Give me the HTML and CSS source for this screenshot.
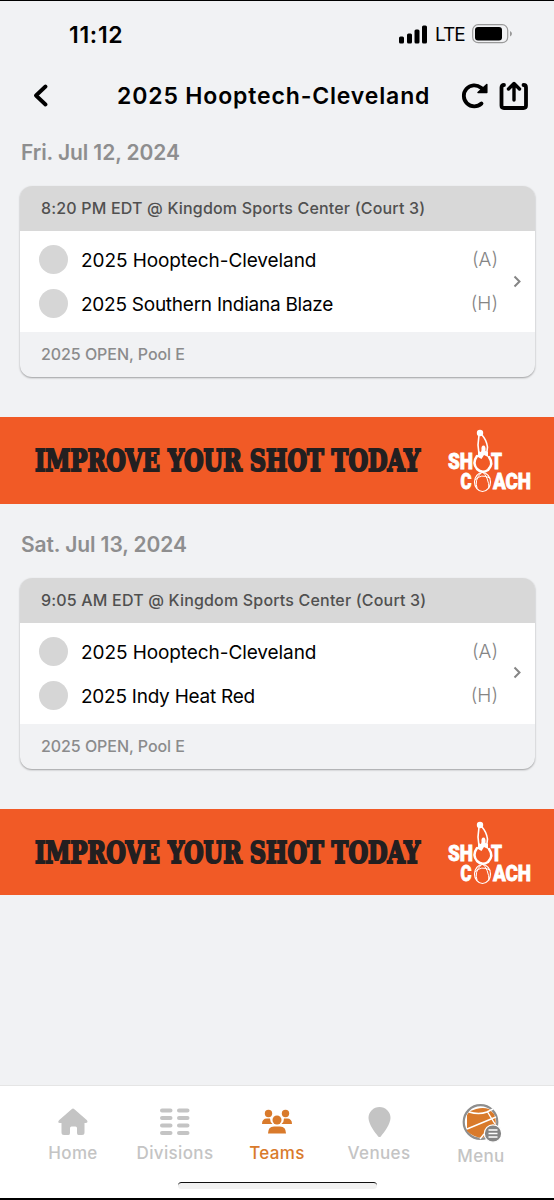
FILE: index.html
```
<!DOCTYPE html>
<html lang="en">
<head>
    <meta charset="UTF-8">
    <title>2025 Hooptech-Cleveland</title>
    <meta name="viewport" content="width=device-width, initial-scale=1.0">
    <link rel="stylesheet" href="styles.css">
</head>
<body>
    <div class="statusbar">
        <span class="time">11:12</span>
        <div class="status-icons">
            <svg width="29" height="19" viewBox="0 0 29 19">
                <rect x="0" y="11.500" width="5" height="7" rx="1.500"/>
                <rect x="8" y="8.500" width="5" height="10" rx="1.500"/>
                <rect x="15.500" y="4.500" width="5" height="14" rx="1.500"/>
                <rect x="23" y="0.500" width="5" height="18" rx="1.500"/>
            </svg>
            <span class="lte">LTE</span>
            <svg width="41" height="20" viewBox="0 0 41 20">
                <rect x="0.700" y="0.700" width="35" height="18" rx="5.500" fill="none" stroke="#999" stroke-width="1.200"/>
                <rect x="3" y="3" width="27" height="13.500" rx="3"/>
                <path d="M38 7Q40 8 40 9.700T38 12.500Z" fill="#999"/>
            </svg>
        </div>
    </div>

    <header>
        <svg class="back" width="16" height="26" viewBox="0 0 16 26" fill="none" stroke="#000" stroke-width="3.800" stroke-linecap="round" stroke-linejoin="round">
            <path d="M13.500 3.500L4 12.500L13.500 21.500"/>
        </svg>
        <h1>2025 Hooptech-Cleveland</h1>
        <svg class="refresh" width="28" height="28" viewBox="0 0 28 28" fill="none" stroke="#000" stroke-width="3.800">
            <path d="M20.500 21.500A10.500 10.500 0 1 1 20 5.700L23 8.500" stroke-linecap="round"/>
            <path d="M25.800 2.500V10.500H17Z" fill="#000" stroke-width="1.500" stroke-linejoin="round"/>
        </svg>
        <svg class="share" width="30" height="30" viewBox="0 0 30 30" fill="none" stroke="#000" stroke-width="3.800" stroke-linecap="round" stroke-linejoin="round">
            <path d="M5 4Q2.500 4 2.500 6.500V24.500Q2.500 27 5 27H24.500Q27 27 27 24.500V6.500Q27 4 24.500 4"/>
            <path d="M15 19V2.500M9.500 8L15 2.500L20.500 8" stroke-width="3.400"/>
        </svg>
    </header>

    <main>
        <section>
            <h2>Fri. Jul 12, 2024</h2>
            <div class="card">
                <div class="card-head">8:20 PM EDT @ Kingdom Sports Center (Court 3)</div>
                <div class="card-body">
                    <div class="teams">
                        <div class="team"><i class="dot"></i><span class="name">2025 Hooptech-Cleveland</span><span class="side">(A)</span></div>
                        <div class="team"><i class="dot"></i><span class="name narrow">2025 Southern Indiana Blaze</span><span class="side">(H)</span></div>
                    </div>
                    <svg class="chevron" width="8" height="14" viewBox="0 0 8 14"><path d="M1.500 1.500L6.500 6.500L1.500 11.500"/></svg>
                </div>
                <div class="card-foot">2025 OPEN, Pool E</div>
            </div>
            <div class="banner">
                <svg width="554" height="87" viewBox="0 0 554 87">
                    <text class="slogan" x="35" y="53.500" textLength="385" lengthAdjust="spacingAndGlyphs">IMPROVE YOUR SHOT TODAY</text>
                    <g transform="translate(446 11)">
                        <g class="logo-text">
                            <text x="2" y="41" textLength="25" lengthAdjust="spacingAndGlyphs">SH</text>
                            <text x="45" y="41" textLength="11" lengthAdjust="spacingAndGlyphs">T</text>
                            <text x="14.500" y="61" textLength="11" lengthAdjust="spacingAndGlyphs">C</text>
                            <text x="47" y="61" textLength="38" lengthAdjust="spacingAndGlyphs">ACH</text>
                        </g>
                        <circle cx="34" cy="5" r="3.200" fill="#fff"/>
                        <g fill="none" stroke="#fff" stroke-linecap="round">
                            <path d="M33 7L32 17L33 26M36 7Q40.500 12 41.500 19L40.500 27" stroke-width="1.600"/>
                            <path d="M31 28Q26 35 31 41Q36 46 42 42Q48 36 43 29" stroke-width="2.500"/>
                            <ellipse cx="36.500" cy="54" rx="8" ry="9.500" stroke-width="1.200"/>
                            <path d="M36 43Q43 50 43 60M35 45Q28 52 31 60M29 52Q35 45 44 50" stroke-width="1"/>
                        </g>
                        <path d="M32 29V23L35 24L35.500 22Q35 17.500 37.500 17.500Q40 17.500 39.500 23L42 24V29L38 27L35.500 31Z" fill="#fff"/>
                    </g>
                </svg>
            </div>
        </section>

        <section>
            <h2>Sat. Jul 13, 2024</h2>
            <div class="card">
                <div class="card-head">9:05 AM EDT @ Kingdom Sports Center (Court 3)</div>
                <div class="card-body">
                    <div class="teams">
                        <div class="team"><i class="dot"></i><span class="name">2025 Hooptech-Cleveland</span><span class="side">(A)</span></div>
                        <div class="team"><i class="dot"></i><span class="name narrow">2025 Indy Heat Red</span><span class="side">(H)</span></div>
                    </div>
                    <svg class="chevron" width="8" height="14" viewBox="0 0 8 14"><path d="M1.500 1.500L6.500 6.500L1.500 11.500"/></svg>
                </div>
                <div class="card-foot">2025 OPEN, Pool E</div>
            </div>
            <div class="banner">
                <svg width="554" height="87" viewBox="0 0 554 87">
                    <text class="slogan" x="35" y="53.500" textLength="385" lengthAdjust="spacingAndGlyphs">IMPROVE YOUR SHOT TODAY</text>
                    <g transform="translate(446 11)">
                        <g class="logo-text">
                            <text x="2" y="41" textLength="25" lengthAdjust="spacingAndGlyphs">SH</text>
                            <text x="45" y="41" textLength="11" lengthAdjust="spacingAndGlyphs">T</text>
                            <text x="14.500" y="61" textLength="11" lengthAdjust="spacingAndGlyphs">C</text>
                            <text x="47" y="61" textLength="38" lengthAdjust="spacingAndGlyphs">ACH</text>
                        </g>
                        <circle cx="34" cy="5" r="3.200" fill="#fff"/>
                        <g fill="none" stroke="#fff" stroke-linecap="round">
                            <path d="M33 7L32 17L33 26M36 7Q40.500 12 41.500 19L40.500 27" stroke-width="1.600"/>
                            <path d="M31 28Q26 35 31 41Q36 46 42 42Q48 36 43 29" stroke-width="2.500"/>
                            <ellipse cx="36.500" cy="54" rx="8" ry="9.500" stroke-width="1.200"/>
                            <path d="M36 43Q43 50 43 60M35 45Q28 52 31 60M29 52Q35 45 44 50" stroke-width="1"/>
                        </g>
                        <path d="M32 29V23L35 24L35.500 22Q35 17.500 37.500 17.500Q40 17.500 39.500 23L42 24V29L38 27L35.500 31Z" fill="#fff"/>
                    </g>
                </svg>
            </div>
        </section>
    </main>

    <nav>
        <div class="tabs">
            <a class="tab">
                <svg width="32" height="38" viewBox="0 0 32 38" fill="currentColor">
                    <path d="M14.600 6.200Q16 5 17.400 6.200L30 17.300Q31.500 20 28.500 20H27.500V29.500Q27.500 32 25 32H21.500Q20 32 20 30V25Q20 23.500 18.500 23.500H14.500Q13 23.500 13 25V30Q13 32 11.500 32H7Q4.500 32 4.500 29.500V20H3Q0 20 2 17.300Z"/>
                </svg>
                <span>Home</span>
            </a>
            <a class="tab">
                <svg width="32" height="38" viewBox="0 0 32 38" fill="none" stroke="currentColor" stroke-width="4" stroke-linecap="round">
                    <path d="M3 7.500H11.500M20 7.500H28.500M3 15H11.500M20 15H28.500M3 22.500H11.500M20 22.500H28.500M3 30H11.500M20 30H28.500"/>
                </svg>
                <span>Divisions</span>
            </a>
            <a class="tab active">
                <svg width="32" height="38" viewBox="0 0 32 38" fill="currentColor">
                    <circle cx="7.500" cy="10.500" r="3.700"/>
                    <circle cx="24.500" cy="10.500" r="3.700"/>
                    <path d="M1 21Q1 15.500 6 15.500H9Q9 19 11.500 21ZM31 21Q31 15.500 26 15.500H23Q23 19 20.500 21Z"/>
                    <circle cx="16" cy="17" r="4.500"/>
                    <path d="M7 30.500Q7 23.500 13 23.500H19Q25 23.500 25 30.500Z"/>
                </svg>
                <span>Teams</span>
            </a>
            <a class="tab">
                <svg width="32" height="38" viewBox="0 0 32 38" fill="currentColor">
                    <path d="M16.500 4A11 11 0 0 1 27.500 15C27.500 21 21 29.500 18 33.200Q16.500 35 15 33.200C12 29.500 5.500 21 5.500 15A11 11 0 0 1 16.500 4Z"/>
                </svg>
                <span>Venues</span>
            </a>
            <a class="tab">
                <svg width="42" height="41" viewBox="0 0 42 41">
                    <circle cx="20.500" cy="19" r="16.800" fill="#fff" stroke="#8e8e8e" stroke-width="2.200"/>
                    <path d="M9 9Q20 3 29 6L34 11Q38 19 33 28L22 35Q13 34 7 28V12Z" fill="#d97a2b"/>
                    <g fill="none" stroke="#fff" stroke-width="1.400">
                        <path d="M9 9Q19 12 27 9L33 6M7 26L36 14M27 8L30 13L35 21M20 36L24 31"/>
                    </g>
                    <circle cx="33" cy="30.500" r="8.700" fill="#858585" stroke="#fff" stroke-width="1.200"/>
                    <path d="M28.500 27H37.500M28.500 30.500H37.500M28.500 34H37.500" stroke="#fff" stroke-width="1.700"/>
                </svg>
                <span>Menu</span>
            </a>
        </div>
        <div class="home-bar"></div>
    </nav>
</body>
</html>
```
FILE: styles.css
```
* {
    box-sizing: border-box;
}
body {
    display: flex;
    flex-direction: column;
    width: 554px;
    height: 1200px;
    margin: 0;
    overflow: hidden;
    background: #f1f2f4;
    border-top: 1px solid #000;
    border-bottom: 2px solid #000;
    font-family: Inter, "Noto Sans", sans-serif;
    color: #000;
}
svg {
    display: block;
    flex-shrink: 0;
}
.statusbar {
    display: flex;
    justify-content: space-between;
    align-items: center;
    height: 66px;
    padding: 0 41px 0 69px;
}
.time {
    padding-top: 1px;
    font-size: 23px;
    font-weight: 600;
    letter-spacing: 0.7px;
}
.status-icons {
    display: flex;
    align-items: center;
    gap: 7px;
}
.lte {
    width: 30px;
    padding-top: 1px;
    font-size: 19px;
    font-weight: 400;
    letter-spacing: -1px;
}
header {
    display: flex;
    align-items: center;
    height: 58px;
    padding: 0 25px 0 32px;
}
h1 {
    width: 314px;
    margin: 0 31px 0 69px;
    font-size: 23px;
    font-weight: 600;
    letter-spacing: 0.85px;
    white-space: nowrap;
}
.share {
    margin-left: 10px;
}
section {
    height: 391.5px;
}
h2 {
    height: 61px;
    margin: 0;
    padding-left: 21px;
    font-size: 21px;
    line-height: 56px;
    font-weight: 600;
    letter-spacing: -0.1px;
    color: #8e8e8f;
}
.card {
    height: 191px;
    margin: 0 19px 0 20px;
    overflow: hidden;
    border-radius: 12px;
    background: #f1f2f4;
    box-shadow: 0 1px 2px rgba(0,0,0,0.35);
}
.card-head {
    height: 45px;
    padding-left: 21px;
    background: #d8d8d8;
    font-size: 16px;
    font-weight: 500;
    line-height: 45px;
    letter-spacing: 0.18px;
    color: #505050;
    white-space: nowrap;
}
.card-body {
    display: flex;
    align-items: center;
    height: 101px;
    padding: 0 14px 0 19px;
    background: #fff;
}
.teams {
    flex: 1;
}
.team {
    display: flex;
    align-items: center;
    height: 44px;
}
.dot {
    width: 29px;
    height: 29px;
    border-radius: 50%;
    background: #d6d6d6;
}
.name {
    margin-left: 13px;
    padding-top: 2px;
    font-size: 19px;
    letter-spacing: -0.08px;
}
.narrow {
    letter-spacing: -0.25px;
}
.side {
    margin-left: auto;
    font-size: 19px;
    font-weight: 300;
    color: #858585;
}
.chevron {
    margin-left: 15px;
    fill: none;
    stroke: #858585;
    stroke-width: 2;
}
.card-foot {
    height: 45px;
    padding-left: 21px;
    font-size: 16px;
    font-weight: 500;
    line-height: 45px;
    letter-spacing: -0.06px;
    color: #8b8b8c;
}
.banner {
    height: 86.5px;
    margin-top: 40px;
    overflow: hidden;
    background: #f15a26;
}
.slogan {
    font-family: "DejaVu Serif", serif;
    font-size: 30.5px;
    font-weight: bold;
    fill: #231f20;
    stroke: #231f20;
    stroke-width: 2.2px;
}
.logo-text {
    font-family: Roboto, sans-serif;
    font-size: 22px;
    font-weight: 900;
    fill: #fff;
    stroke: #fff;
    stroke-width: 0.8px;
}
nav {
    height: 113px;
    margin-top: auto;
    background: #fff;
    border-top: 1px solid #e5e5e5;
}
.tabs {
    display: grid;
    grid-template-columns: repeat(5, 102px);
    height: 96px;
    padding-left: 22px;
}
.tab {
    display: flex;
    flex-direction: column;
    align-items: center;
    padding-top: 17px;
    font-size: 17px;
    font-weight: 500;
    line-height: 24px;
    letter-spacing: 0.35px;
    color: #c4c4c4;
}
.active {
    color: #d97a2b;
}
.home-bar {
    width: 199px;
    height: 7px;
    margin: 0 auto;
    border-top: 1.5px solid #111;
    border-radius: 4px;
    background: #f1f1f1;
}
```
